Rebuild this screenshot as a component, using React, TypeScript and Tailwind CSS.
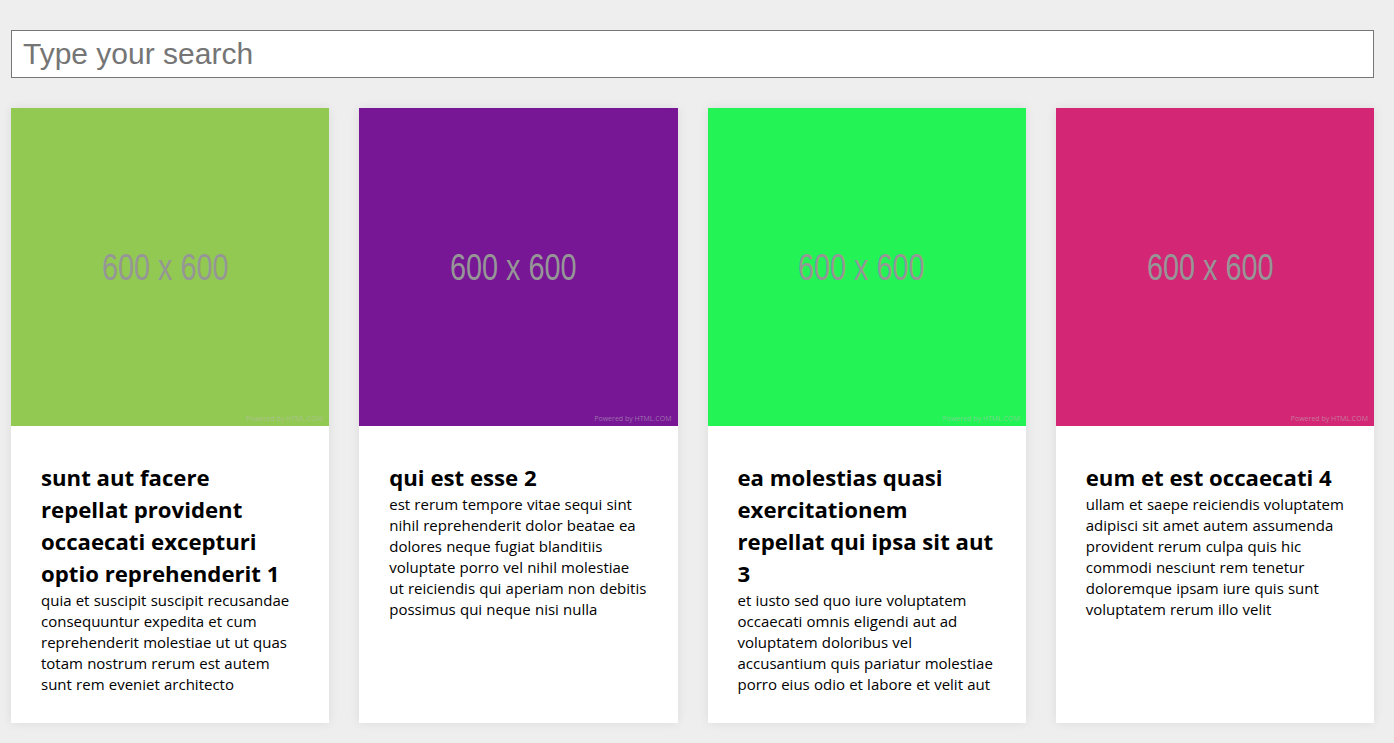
import React from 'react';

interface Post {
  id: number;
  title: string;
  body: string;
  color: string;
}

const posts: Post[] = [
  {
    id: 1,
    title: 'sunt aut facere repellat provident occaecati excepturi optio reprehenderit',
    body: 'quia et suscipit suscipit recusandae consequuntur expedita et cum reprehenderit molestiae ut ut quas totam nostrum rerum est autem sunt rem eveniet architecto',
    color: 'bg-[#92c952]',
  },
  {
    id: 2,
    title: 'qui est esse',
    body: 'est rerum tempore vitae sequi sint nihil reprehenderit dolor beatae ea dolores neque fugiat blanditiis voluptate porro vel nihil molestiae ut reiciendis qui aperiam non debitis possimus qui neque nisi nulla',
    color: 'bg-[#771796]',
  },
  {
    id: 3,
    title: 'ea molestias quasi exercitationem repellat qui ipsa sit aut',
    body: 'et iusto sed quo iure voluptatem occaecati omnis eligendi aut ad voluptatem doloribus vel accusantium quis pariatur molestiae porro eius odio et labore et velit aut',
    color: 'bg-[#24f355]',
  },
  {
    id: 4,
    title: 'eum et est occaecati',
    body: 'ullam et saepe reiciendis voluptatem adipisci sit amet autem assumenda provident rerum culpa quis hic commodi nesciunt rem tenetur doloremque ipsam iure quis sunt voluptatem rerum illo velit',
    color: 'bg-[#d32776]',
  },
];

const Placeholder = ({ color }: { color: string }) => (
  <div className={`relative aspect-square w-full flex items-center justify-center ${color}`}>
    <span className="mr-[10px] font-['Liberation_Sans',Arial,sans-serif] text-[37px] leading-none text-[#969696] scale-x-[0.78]">
      600 x 600
    </span>
    <span className="absolute right-[6px] bottom-[4px] font-['Open_Sans',sans-serif] text-[7px] leading-none text-[rgba(190,190,190,0.55)]">
      Powered by HTML.COM
    </span>
  </div>
);

const Card = ({ post }: { post: Post }) => (
  <div className="bg-white shadow-[0_0_10px_rgba(0,0,0,0.08)] flex flex-col">
    <Placeholder color={post.color} />
    <div className="px-[30px] pt-[36px] pb-[28px] font-['Open_Sans',sans-serif] text-black">
      <h2 className="text-[22.2px] leading-[32px] font-bold">
        {post.title} {post.id}
      </h2>
      <p className="text-[15px] leading-[21px] [word-spacing:0.3px]">{post.body}</p>
    </div>
  </div>
);

export default function App() {
  return (
    <div className="min-h-screen bg-[#eeeeee] pl-[11px] pr-[20px] pt-[30px] pb-[20px]">
      <input
        type="text"
        placeholder="Type your search"
        className="w-full h-[48px] bg-white border border-[#767676] px-[11px] font-['Liberation_Sans',Arial,sans-serif] text-[30px] text-black placeholder:text-[#757575] outline-none"
      />
      <div className="grid grid-cols-4 gap-[30px] mt-[30px]">
        {posts.map((p) => (
          <Card key={p.id} post={p} />
        ))}
      </div>
    </div>
  );
}
